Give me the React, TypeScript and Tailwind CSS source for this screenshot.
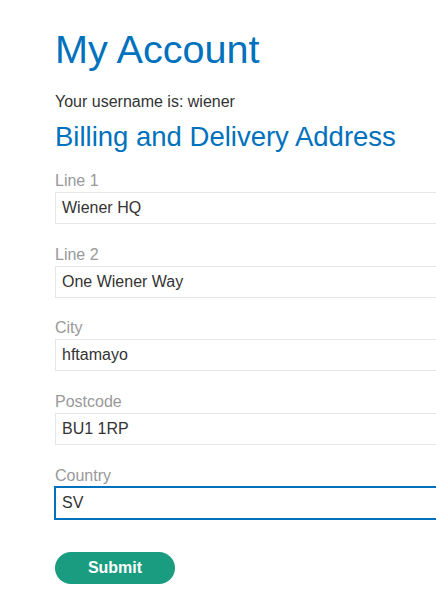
import React from "react";

const fields = [
  { label: "Line 1", value: "Wiener HQ" },
  { label: "Line 2", value: "One Wiener Way" },
  { label: "City", value: "hftamayo" },
  { label: "Postcode", value: "BU1 1RP" },
];

export default function App() {
  return (
    <div
      className="w-[436px] h-[608px] overflow-hidden bg-white pl-[55px] pt-[25px] text-[#333]"
      style={{ fontFamily: '"Liberation Sans", Arial, sans-serif' }}
    >
      <h1 className="text-[39.6px] leading-[48px] text-[#0071bc] whitespace-nowrap">My Account</h1>
      <p className="mt-[17px] text-[16px] leading-[24px] text-[#333]">Your username is: wiener</p>
      <h2 className="mt-[7px] text-[27.5px] leading-[32px] text-[#0071bc] whitespace-nowrap">
        Billing and Delivery Address
      </h2>
      <form className="mt-[18px]" onSubmit={(e) => e.preventDefault()}>
        {fields.map((f) => (
          <div key={f.label} className="mb-[20.5px]">
            <label className="block text-[16px] leading-[20px] text-[#999] mb-[1px]">{f.label}</label>
            <div className="w-[420px] h-[32px] border border-[#e6e6e6] pl-[6px] flex items-center text-[16px] text-[#333]">
              {f.value}
            </div>
          </div>
        ))}
        <div className="pt-[1px]">
          <label className="block text-[16px] leading-[20px] text-[#999] mb-[1px]">Country</label>
          <div className="w-[420px] h-[32px] border border-[#0071bc] outline outline-1 outline-[#0071bc] pl-[6px] flex items-center text-[16px] text-[#333]">
            SV
          </div>
        </div>
        <button
          type="submit"
          className="mt-[33px] w-[120px] h-[31.5px] rounded-full bg-[#1a9c80] text-white font-bold text-[16px] flex items-center justify-center"
        >
          Submit
        </button>
      </form>
    </div>
  );
}
